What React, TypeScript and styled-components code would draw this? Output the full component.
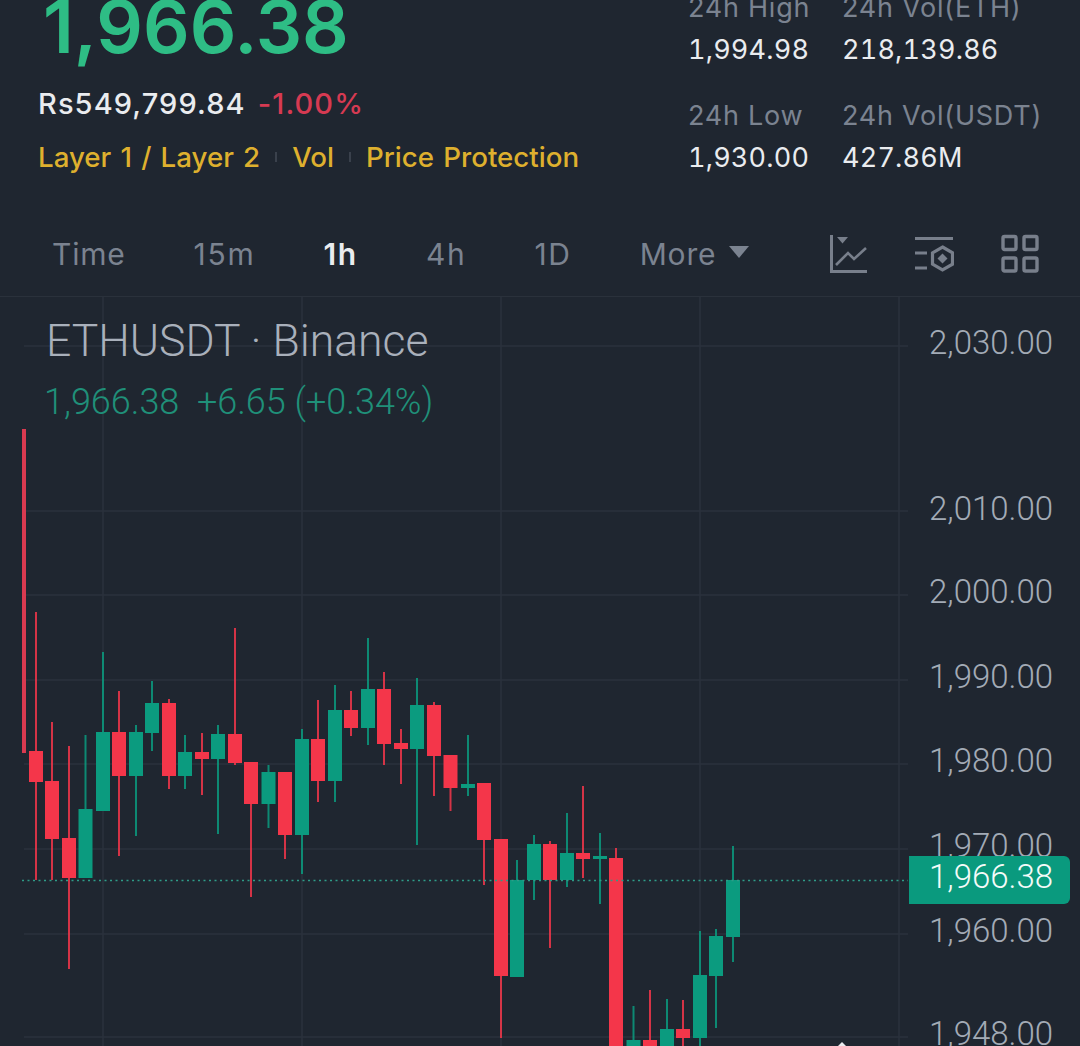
import React from 'react'
import styled, { createGlobalStyle } from 'styled-components'

const GlobalStyle = createGlobalStyle`
  html, body {
    margin: 0;
    padding: 0;
    background: #1f2630;
  }
`

const Page = styled.div`
  width: 1080px;
  height: 1046px;
  overflow: hidden;
  display: flex;
  flex-direction: column;
  background: #1f2630;
  font-family: Inter, "Liberation Sans", sans-serif;
`

const Header = styled.header`
  height: 218px;
  flex: none;
  display: flex;
  justify-content: space-between;
`

const Summary = styled.div`
  display: flex;
  flex-direction: column;
  padding-left: 38px;
  margin-top: -11px;
`

const BigPrice = styled.div`
  margin-left: 5px;
  font-size: 73px;
  line-height: 76px;
  font-weight: 600;
  color: #2ebd85;
`

const SubRow = styled.div`
  display: flex;
  gap: 12px;
  margin-top: 21px;
  font-size: 29px;
  letter-spacing: 1.1px;
  line-height: 36px;
  font-weight: 500;
`

const Fiat = styled.span`
  color: #eaecef;
`

const Change = styled.span`
  color: #d63a52;
`

const TagRow = styled.div`
  display: flex;
  align-items: center;
  gap: 15px;
  margin-top: 17px;
  font-size: 27.7px;
  word-spacing: 1.8px;
  line-height: 36px;
  font-weight: 500;
  color: #deb02e;
`

const TagDivider = styled.i`
  width: 2px;
  height: 10px;
  background: #3a414c;
`

const Stats = styled.div`
  display: grid;
  grid-template-columns: 154px 204px;
  grid-auto-rows: 108px;
  margin-top: -9px;
  padding-right: 34px;
  font-size: 27px;
  line-height: 34px;
  white-space: nowrap;
`

const Stat = styled.div`
  display: flex;
  flex-direction: column;
  gap: 8px;
`

const StatLabel = styled.span`
  letter-spacing: 0.75px;
  color: #7b8390;
`

const StatValue = styled.span`
  font-feature-settings: "tnum";
  letter-spacing: 0.2px;
  color: #eaecef;
`

const Toolbar = styled.nav`
  height: 78px;
  flex: none;
  display: flex;
  align-items: center;
  gap: 68px;
  padding: 0 41px 6px 52px;
  box-sizing: border-box;
`

const Tab = styled.span<{ $active?: boolean; $numeric?: boolean }>`
  font-size: 30px;
  letter-spacing: ${p => (p.$numeric ? 1.7 : 0.8)}px;
  font-weight: ${p => (p.$active ? 600 : 400)};
  color: ${p => (p.$active ? '#eaecef' : '#7b8390')};
`

const MoreTab = styled(Tab)`
  display: flex;
  align-items: center;
  gap: 13px;
`

const CaretIcon = styled.svg`
  margin-top: -4px;
`

const ToolIcons = styled.div`
  margin-left: auto;
  display: flex;
  gap: 47px;
  color: #787f8b;
`

const ChartArea = styled.section`
  position: relative;
  flex: 1;
  border-top: 1px solid #2a313b;
  font-family: Roboto, "Liberation Sans", sans-serif;
`

const ChartSvg = styled.svg`
  display: block;
`

const Legend = styled.div`
  position: absolute;
  left: 46px;
  top: 19px;
`

const LegendTitle = styled.div`
  font-size: 44.5px;
  line-height: 50px;
  font-weight: 300;
  color: #a9b0bb;
`

const LegendQuote = styled.div`
  margin: 16px 0 0 -2px;
  font-size: 36px;
  line-height: 40px;
  font-weight: 300;
  color: #1f9079;
`

const AxisLabel = styled.span<{ $y: number }>`
  position: absolute;
  left: 929px;
  top: ${p => p.$y - 297 - 20}px;
  font-size: 33px;
  line-height: 40px;
  font-weight: 300;
  color: #a3abb6;
`

const PriceBadge = styled.div`
  position: absolute;
  left: 909px;
  top: 559px;
  width: 161px;
  height: 48px;
  box-sizing: border-box;
  padding: 1px 0 0 20px;
  border-radius: 0 6px 6px 0;
  background: #0a9a7e;
  font-size: 33px;
  line-height: 40px;
  font-weight: 300;
  color: #f4fbf9;
`

const RED = '#f4364a'
const GREEN = '#0b9b7f'
const GRID = '#2b323c'

// x, wick top, wick bottom, body top, body bottom, up?
const candles: [number, number, number, number, number, boolean][] = [
  [36, 612, 880, 751, 782, false],
  [52, 722, 880, 781, 839, false],
  [69, 746, 969, 838, 878, false],
  [85.5, 735, 878, 809, 878, true],
  [103, 652, 811, 732, 811, true],
  [119, 691, 856, 732, 776, false],
  [136, 725, 836, 732, 776, true],
  [152, 681, 751, 703, 733, true],
  [169, 699, 789, 703, 776, false],
  [185, 735, 789, 752, 776, true],
  [202, 733, 795, 752, 759, false],
  [218, 725, 834, 734, 759, true],
  [235, 628, 765, 734, 763, false],
  [251, 762, 897, 762, 804, false],
  [268.5, 765, 828, 772, 804, true],
  [285, 772, 859, 772, 835, false],
  [302, 729, 874, 739, 835, true],
  [318, 700, 802, 739, 781, false],
  [335, 685, 802, 710, 781, true],
  [351, 691, 736, 710, 728, false],
  [368, 638, 745, 689, 728, true],
  [384, 672, 765, 689, 744, false],
  [401, 729, 784, 743, 749, false],
  [417, 678, 845, 705, 749, true],
  [434, 702, 796, 705, 756, false],
  [450.5, 755, 811, 755, 788, false],
  [468, 735, 796, 784, 788, true],
  [484, 783, 885, 783, 840, false],
  [501, 839, 1038, 839, 976, false],
  [517, 860, 977, 880, 977, true],
  [534, 835, 900, 844, 880, true],
  [550, 841, 948, 844, 880, false],
  [567, 813, 887, 853, 880, true],
  [583, 786, 878, 853, 859, false],
  [600, 833, 904, 856, 859, true],
  [616, 848, 1060, 858, 1060, false],
  [633.5, 1006, 1060, 1040, 1060, true],
  [650, 990, 1060, 1040, 1060, false],
  [667, 999, 1060, 1029, 1060, true],
  [683, 1000, 1060, 1029, 1038, false],
  [700, 931, 1060, 975, 1038, true],
  [716, 929, 1028, 936, 976, true],
  [733, 846, 962, 880, 937, true],
]

const gridRows = [346, 511, 595, 680, 764, 849, 934, 1037]
const gridCols = [103, 302, 501, 700, 899]

const axisPrices: [string, number][] = [
  ['2,030.00', 343],
  ['2,010.00', 509],
  ['2,000.00', 592],
  ['1,990.00', 677],
  ['1,980.00', 761],
  ['1,970.00', 846],
  ['1,960.00', 931],
  ['1,948.00', 1034],
]

function IndicatorIcon() {
  return (
    <svg width="38" height="40" viewBox="0 0 38 40" fill="none" stroke="currentColor" strokeWidth="3">
      <path d="M2.5 1v36.5H38" />
      <path d="M7 31l12-12 6 6 12-11" strokeWidth="2.6" />
      <path d="M8 3h11l-5.500 6.500z" fill="currentColor" stroke="none" />
    </svg>
  )
}

function SettingsIcon() {
  return (
    <svg width="40" height="40" viewBox="0 0 40 40" fill="none" stroke="currentColor" strokeWidth="3.2">
      <path d="M1 4.500h38M1 19h12M1 34h12" />
      <path d="M28.500 13l10 5.800v11.400l-10 5.800-10-5.800V18.800z" />
      <path d="M28.500 19.500l5 5-5 5-5-5z" fill="currentColor" stroke="none" />
    </svg>
  )
}

function LayoutIcon() {
  return (
    <svg width="38" height="40" viewBox="0 0 38 40" fill="none" stroke="currentColor" strokeWidth="3.4">
      <rect x="2" y="2.500" width="13" height="13" rx="1.500" />
      <rect x="23" y="2.500" width="13" height="13" rx="1.500" />
      <rect x="2" y="24" width="13" height="13" rx="1.500" />
      <rect x="23" y="24" width="13" height="13" rx="1.500" />
    </svg>
  )
}

function Caret() {
  return (
    <CaretIcon width="20" height="12" viewBox="0 0 20 12">
      <path d="M0 0h20l-10 12z" fill="currentColor" />
    </CaretIcon>
  )
}

function CandleChart() {
  return (
    <ChartSvg width="1080" height="749" viewBox="0 297 1080 749">
      {gridCols.map(x => (
        <line key={x} x1={x} x2={x} y1={297} y2={1046} stroke={GRID} strokeWidth="1.500" />
      ))}
      {gridRows.map(y => (
        <line key={y} x1={24} x2={908} y1={y} y2={y} stroke={GRID} strokeWidth="1.500" />
      ))}
      <rect x={22} y={429} width={4} height={324} fill="#d93a50" />
      {candles.map(([x, wickTop, wickBottom, bodyTop, bodyBottom, up]) => {
        const color = up ? GREEN : RED
        return (
          <g key={x} fill={color}>
            <rect x={x - 1} y={wickTop} width={2} height={wickBottom - wickTop} opacity={0.85} />
            <rect x={x - 7} y={bodyTop} width={14} height={bodyBottom - bodyTop} />
          </g>
        )
      })}
      <line x1={22} x2={908} y1={880.500} y2={880.500} stroke="#2f9c88" strokeWidth="1.500" strokeDasharray="2 3.500" />
      <path d="M842 1042l5 5h-10z" fill="#eaecef" />
    </ChartSvg>
  )
}

export default function App() {
  return (
    <Page>
      <GlobalStyle />
      <Header>
        <Summary>
          <BigPrice>1,966.38</BigPrice>
          <SubRow>
            <Fiat>Rs549,799.84</Fiat>
            <Change>-1.00%</Change>
          </SubRow>
          <TagRow>
            <span>Layer 1 / Layer 2</span>
            <TagDivider />
            <span>Vol</span>
            <TagDivider />
            <span>Price Protection</span>
          </TagRow>
        </Summary>
        <Stats>
          <Stat>
            <StatLabel>24h High</StatLabel>
            <StatValue>1,994.98</StatValue>
          </Stat>
          <Stat>
            <StatLabel>24h Vol(ETH)</StatLabel>
            <StatValue>218,139.86</StatValue>
          </Stat>
          <Stat>
            <StatLabel>24h Low</StatLabel>
            <StatValue>1,930.00</StatValue>
          </Stat>
          <Stat>
            <StatLabel>24h Vol(USDT)</StatLabel>
            <StatValue>427.86M</StatValue>
          </Stat>
        </Stats>
      </Header>
      <Toolbar>
        <Tab>Time</Tab>
        <Tab $numeric>15m</Tab>
        <Tab $numeric $active>1h</Tab>
        <Tab $numeric>4h</Tab>
        <Tab $numeric>1D</Tab>
        <MoreTab>
          More
          <Caret />
        </MoreTab>
        <ToolIcons>
          <IndicatorIcon />
          <SettingsIcon />
          <LayoutIcon />
        </ToolIcons>
      </Toolbar>
      <ChartArea>
        <CandleChart />
        <Legend>
          <LegendTitle>ETHUSDT · Binance</LegendTitle>
          <LegendQuote>1,966.38 &nbsp;+6.65 (+0.34%)</LegendQuote>
        </Legend>
        {axisPrices.map(([label, y]) => (
          <AxisLabel key={label} $y={y}>
            {label}
          </AxisLabel>
        ))}
        <PriceBadge>1,966.38</PriceBadge>
      </ChartArea>
    </Page>
  )
}
